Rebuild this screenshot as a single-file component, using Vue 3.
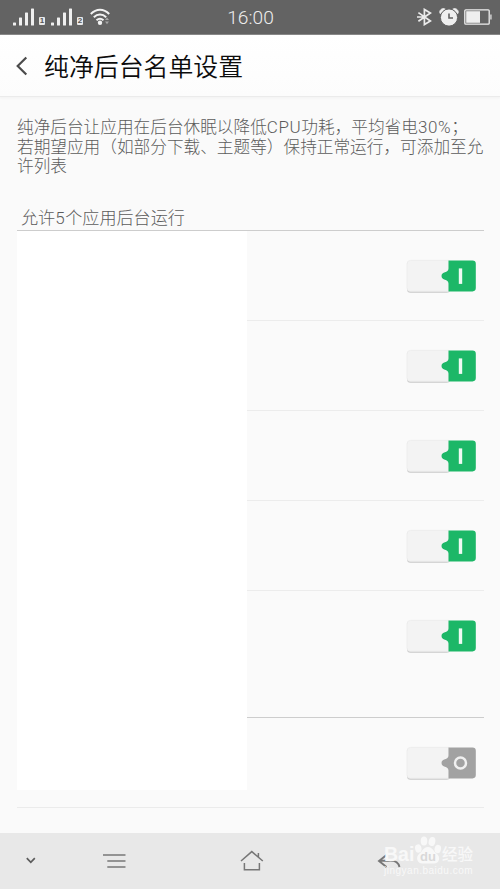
<script setup>
const rows = [
  { id: 1, on: true },
  { id: 2, on: true },
  { id: 3, on: true },
  { id: 4, on: true },
  { id: 5, on: true },
  { id: 6, on: false },
]
const bars = [
  { x: 0, h: 3 },
  { x: 6, h: 8 },
  { x: 12, h: 13 },
  { x: 18, h: 17 },
]
</script>

<template>
  <div class="screen">
    <header class="status">
      <div class="signals">
        <template v-for="sim in 2" :key="sim">
          <svg class="bars" width="21" height="18" viewBox="0 0 21 18">
            <rect v-for="b in bars" :key="b.x" :x="b.x" :y="17.5 - b.h" width="3" :height="b.h" rx="0.6" fill="#efefef" />
          </svg>
          <span class="sim">{{ sim }}</span>
        </template>
        <svg class="wifi" width="21" height="18" viewBox="0 0 21 18" fill="none" stroke="#f2f2f2" stroke-width="2">
          <path d="M.8 6C6.3 .4 13.7 .4 19.2 6M3.8 9.3C7.5 5.7 12.5 5.7 16.2 9.3M6.5 12.2Q10 9.2 13.5 12.2" />
          <circle cx="10" cy="14.8" r="2.2" fill="#f2f2f2" stroke="none" />
          <path d="m15 12 2-2.6 2 2.6zM15 13.6l2 2.6 2-2.6z" fill="#a5a5a5" stroke="none" />
        </svg>
      </div>
      <time class="clock">16:00</time>
      <div class="indicators">
        <svg width="16" height="18" viewBox="0 0 16 18" fill="none" stroke="#ececec" stroke-width="1.7">
          <path d="M1.4 4.6 13.4 13 7.4 16.6V1.4L13.4 5 1.4 13.2M0 9H6" />
        </svg>
        <svg class="alarm" width="20" height="18" viewBox="0 0 20 18">
          <path d="M1.2 5.6C-.4 2.6 3-.6 6.2 1.2ZM18.8 5.6C20.4 2.6 17-.6 13.8 1.2Z" fill="#efefef" stroke="#efefef" />
          <circle cx="10" cy="9.5" r="8.6" fill="#efefef" stroke="#636363" stroke-width="1" />
          <path d="M10 5.5V10H14" fill="none" stroke="#636363" stroke-width="1.6" />
        </svg>
        <svg class="battery" width="28" height="16" viewBox="0 0 28 16">
          <rect x=".8" y=".8" width="24.4" height="14.4" rx="1" fill="none" stroke="#efefef" stroke-width="1.3" />
          <rect x="2.2" y="2.2" width="13.8" height="11.6" fill="#efefef" />
          <path d="M25.8 5.5H27.8V10.5H25.8z" fill="#bdbdbd" />
        </svg>
      </div>
    </header>

    <div class="titlebar">
      <svg width="12" height="20" viewBox="0 0 12 20" fill="none" stroke="#4b4b4b" stroke-width="2.2">
        <path d="M10.3 1.5 1.7 10 10.3 18.5" />
      </svg>
      <h1>纯净后台名单设置</h1>
    </div>

    <main>
      <p class="intro">纯净后台让应用在后台休眠以降低<span class="latin">CPU</span>功耗，平均省电<span class="latin">30%</span>；<br />若期望应用（如部分下载、主题等）保持正常运行，可添加至允<br />许列表</p>
      <h2>允许<span class="latin">5</span>个应用后台运行</h2>
      <div class="list">
        <div class="names"></div>
        <div class="switches">
          <div v-for="row in rows" :key="row.id" class="row">
            <svg width="72" height="36" viewBox="0 0.6 72 36">
              <rect x="1" y="3" width="43" height="31.3" rx="3.5" fill="#c9c9c9" />
              <path d="M43 2H4.5Q1 2 1 5.5V29.5Q1 33 4.5 33H43Z" fill="#f3f3f3" stroke="#e9e9e9" stroke-width=".7" />
              <path
                d="M42.5 2H66.5Q69.8 2 69.8 5.3V29.7Q69.8 33 66.5 33H42.5V25C42.5 20.5 35.5 22 35.5 17.5S42.5 14.5 42.5 10Z"
                :fill="row.on ? '#1cb767' : '#a2a2a2'"
              />
              <rect v-if="row.on" x="52.8" y="10" width="3.4" height="15.5" fill="#eefaf3" />
              <circle v-else cx="54.5" cy="17.5" r="5.5" fill="none" stroke="#f0f0f0" stroke-width="2.5" />
            </svg>
          </div>
        </div>
      </div>
    </main>

    <nav>
      <svg class="navicons" width="500" height="56" viewBox="0 0 500 56" fill="none" stroke="#777" stroke-width="1.5">
        <path d="M26.8 25.2 30.8 29.3 34.8 25.2" stroke="#5c5c5c" stroke-width="1.7" />
        <path d="M103 22H125.5M107.3 28H125.5M107.3 34H125.5" stroke-width="1.7" />
        <path d="M241 28 251.8 18.6 262.8 28M258.4 24V20M244.4 30V36.8H259.4V30" />
        <path d="M386.5 22 379 28 386.5 34M379.5 27.8H388C395 27 398.5 29 399.5 34" stroke-width="1.9" />
      </svg>
      <div class="watermark">
        <div class="brand">
          <span class="bai">Bai</span>
          <svg width="28" height="30" viewBox="0 0 28 30">
            <g fill="#f8f8f8">
              <ellipse cx="4.3" cy="13.5" rx="3.2" ry="4.2" transform="rotate(-12 4.3 13.5)" />
              <ellipse cx="10" cy="6" rx="3.3" ry="4.6" />
              <ellipse cx="18" cy="6.5" rx="3.3" ry="4.6" transform="rotate(12 18 6.5)" />
              <ellipse cx="23.8" cy="14" rx="3.2" ry="4.2" transform="rotate(12 23.8 14)" />
              <path d="M14 12C9.5 12 8.8 16 5.5 18.5C1.2 22 3 28.5 8.5 28.5H20C25.5 28.5 27 22 22.5 18.5C19 16 18.5 12 14 12Z" />
            </g>
            <text x="14" y="25.8" text-anchor="middle">du</text>
          </svg>
          <span class="cn">经验</span>
        </div>
        <div class="site">jingyan.baidu.com</div>
      </div>
    </nav>
  </div>
</template>

<style>
body {
  margin: 0;
  background: #fafafa;
}
</style>

<style scoped>
.screen {
  width: 500px;
  height: 889px;
  display: flex;
  flex-direction: column;
  overflow: hidden;
  background: #fafafa;
  font-family: "Noto Sans CJK SC", sans-serif;
  font-weight: 300;
}
.status {
  height: 35px;
  box-sizing: border-box;
  flex: none;
  display: grid;
  grid-template-columns: 200px 100px 200px;
  align-items: center;
  background: #636363;
  border-bottom: 1px solid #818181;
}
.signals {
  display: flex;
  align-items: center;
  padding-left: 13px;
}
.sim {
  box-sizing: border-box;
  width: 6px;
  height: 8px;
  margin: 8px 6px 0 5px;
  border-radius: 1px;
  background: #e9e9e9;
  color: #555;
  font: bold 8px/8px "Liberation Sans", sans-serif;
  text-align: center;
}
.wifi {
  margin-left: 1px;
}
.clock {
  padding: 2px 0 0 1px;
  color: #ededed;
  font: 300 19.2px/24px Roboto, sans-serif;
  text-align: center;
}
.indicators {
  display: flex;
  align-items: center;
  padding-left: 117px;
}
.alarm {
  margin-left: 6px;
}
.battery {
  margin-left: 5px;
}
.titlebar {
  flex: none;
  height: 62px;
  box-sizing: border-box;
  display: flex;
  align-items: center;
  padding: 0 16px;
  gap: 16px;
  background: linear-gradient(#fff, #fcfcfc);
  border-bottom: 1px solid #ebebeb;
  box-shadow: 0 1px 2px #f2f2f2;
}
h1 {
  margin: 0;
  padding-bottom: 2px;
  font-size: 24.9px;
  line-height: 38px;
  font-weight: 350;
  color: #0c0c0c;
}
main {
  flex: none;
  height: 736px;
  box-sizing: border-box;
  padding: 20px 16px 0 17px;
}
.intro {
  margin: 0;
  height: 59px;
  font-size: 16.67px;
  line-height: 19.5px;
  color: #5c5c5c;
  white-space: nowrap;
}
.latin {
  font-family: Roboto, sans-serif;
  font-size: 17px;
  line-height: 1;
  letter-spacing: 0.6px;
}
h2 {
  margin: 28px 0 0;
  padding-left: 4px;
  height: 26px;
  font-size: 17.1px;
  line-height: 26px;
  font-weight: 300;
  color: #5c5c5c;
}
.list {
  display: grid;
  grid-template-columns: 230px 1fr;
  border-top: 1px solid #cdcdcd;
  border-bottom: 1px solid #ebebeb;
}
.names {
  height: 559px;
  background: #fff;
}
.row {
  height: 90px;
  box-sizing: border-box;
  display: flex;
  justify-content: flex-end;
  align-items: flex-start;
  padding: 28px 6px 0 0;
  border-bottom: 1px solid #ececec;
}
.row:nth-child(5) {
  height: 127px;
  border-bottom-color: #cdcdcd;
}
.row:last-child {
  height: 89px;
  border: 0;
}
nav {
  flex: none;
  height: 56px;
  display: grid;
  background: #e8e8e8;
}
.navicons,
.watermark {
  grid-area: 1 / 1;
}
.watermark {
  padding: 1px 0 0 384px;
  color: #f8f8f8;
  font-family: "Liberation Sans", sans-serif;
}
.brand {
  display: flex;
  height: 31px;
  align-items: flex-end;
  font-weight: bold;
  font-size: 19.5px;
  line-height: 19px;
}
.bai {
  width: 30px;
  padding-bottom: 1px;
}
.brand text {
  font: bold 13px "Liberation Sans", sans-serif;
  fill: #d9d9d9;
}
.cn {
  font: 500 15.5px/22px "Noto Sans CJK SC", sans-serif;
  padding-bottom: 1px;
}
.site {
  font-size: 10px;
  line-height: 12px;
  letter-spacing: 0.5px;
}
</style>
